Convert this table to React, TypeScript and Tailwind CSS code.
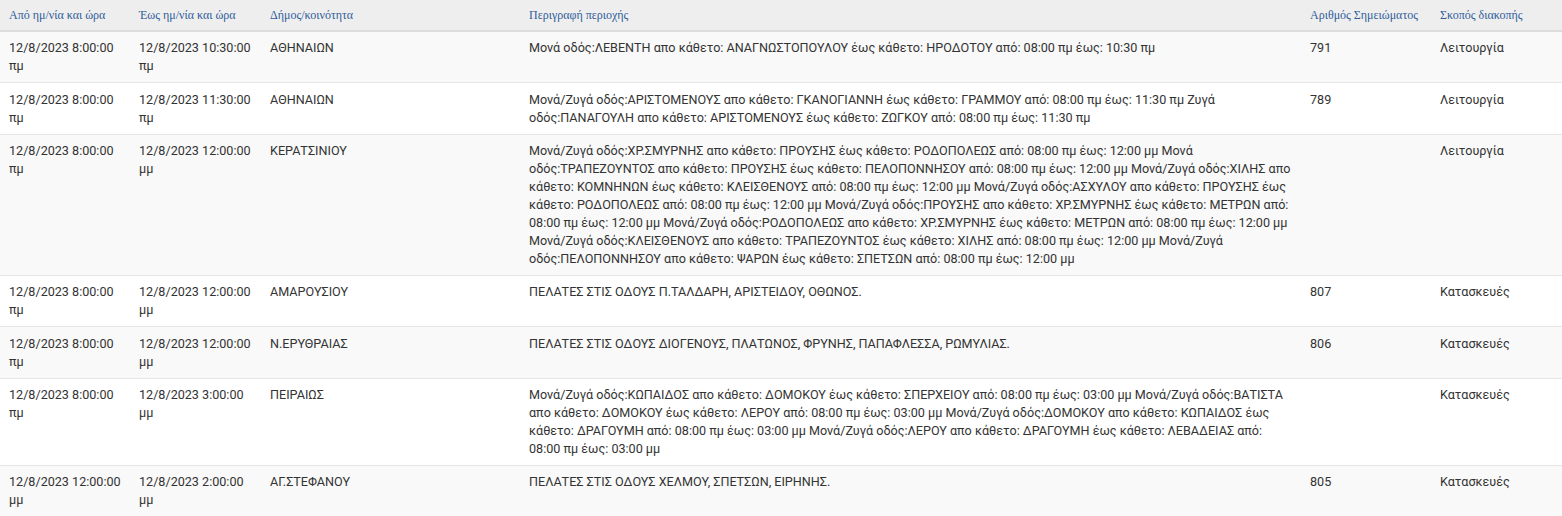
import React from "react";

type Row = {
  from: string[];
  to: string[];
  dimos: string;
  desc: string[];
  num: string;
  purpose: string;
};

const rows: Row[] = [
  {
    from: ["12/8/2023 8:00:00", "πμ"],
    to: ["12/8/2023 10:30:00", "πμ"],
    dimos: "ΑΘΗΝΑΙΩΝ",
    desc: [
      "Μονά οδός:ΛΕΒΕΝΤΗ απο κάθετο: ΑΝΑΓΝΩΣΤΟΠΟΥΛΟΥ έως κάθετο: ΗΡΟΔΟΤΟΥ από: 08:00 πμ έως: 10:30 πμ",
    ],
    num: "791",
    purpose: "Λειτουργία",
  },
  {
    from: ["12/8/2023 8:00:00", "πμ"],
    to: ["12/8/2023 11:30:00", "πμ"],
    dimos: "ΑΘΗΝΑΙΩΝ",
    desc: [
      "Μονά/Ζυγά οδός:ΑΡΙΣΤΟΜΕΝΟΥΣ απο κάθετο: ΓΚΑΝΟΓΙΑΝΝΗ έως κάθετο: ΓΡΑΜΜΟΥ από: 08:00 πμ έως: 11:30 πμ Ζυγά",
      "οδός:ΠΑΝΑΓΟΥΛΗ απο κάθετο: ΑΡΙΣΤΟΜΕΝΟΥΣ έως κάθετο: ΖΩΓΚΟΥ από: 08:00 πμ έως: 11:30 πμ",
    ],
    num: "789",
    purpose: "Λειτουργία",
  },
  {
    from: ["12/8/2023 8:00:00", "πμ"],
    to: ["12/8/2023 12:00:00", "μμ"],
    dimos: "ΚΕΡΑΤΣΙΝΙΟΥ",
    desc: [
      "Μονά/Ζυγά οδός:ΧΡ.ΣΜΥΡΝΗΣ απο κάθετο: ΠΡΟΥΣΗΣ έως κάθετο: ΡΟΔΟΠΟΛΕΩΣ από: 08:00 πμ έως: 12:00 μμ Μονά",
      "οδός:ΤΡΑΠΕΖΟΥΝΤΟΣ απο κάθετο: ΠΡΟΥΣΗΣ έως κάθετο: ΠΕΛΟΠΟΝΝΗΣΟΥ από: 08:00 πμ έως: 12:00 μμ Μονά/Ζυγά οδός:ΧΙΛΗΣ απο",
      "κάθετο: ΚΟΜΝΗΝΩΝ έως κάθετο: ΚΛΕΙΣΘΕΝΟΥΣ από: 08:00 πμ έως: 12:00 μμ Μονά/Ζυγά οδός:ΑΣΧΥΛΟΥ απο κάθετο: ΠΡΟΥΣΗΣ έως",
      "κάθετο: ΡΟΔΟΠΟΛΕΩΣ από: 08:00 πμ έως: 12:00 μμ Μονά/Ζυγά οδός:ΠΡΟΥΣΗΣ απο κάθετο: ΧΡ.ΣΜΥΡΝΗΣ έως κάθετο: ΜΕΤΡΩΝ από:",
      "08:00 πμ έως: 12:00 μμ Μονά/Ζυγά οδός:ΡΟΔΟΠΟΛΕΩΣ απο κάθετο: ΧΡ.ΣΜΥΡΝΗΣ έως κάθετο: ΜΕΤΡΩΝ από: 08:00 πμ έως: 12:00 μμ",
      "Μονά/Ζυγά οδός:ΚΛΕΙΣΘΕΝΟΥΣ απο κάθετο: ΤΡΑΠΕΖΟΥΝΤΟΣ έως κάθετο: ΧΙΛΗΣ από: 08:00 πμ έως: 12:00 μμ Μονά/Ζυγά",
      "οδός:ΠΕΛΟΠΟΝΝΗΣΟΥ απο κάθετο: ΨΑΡΩΝ έως κάθετο: ΣΠΕΤΣΩΝ από: 08:00 πμ έως: 12:00 μμ",
    ],
    num: "",
    purpose: "Λειτουργία",
  },
  {
    from: ["12/8/2023 8:00:00", "πμ"],
    to: ["12/8/2023 12:00:00", "μμ"],
    dimos: "ΑΜΑΡΟΥΣΙΟΥ",
    desc: ["ΠΕΛΑΤΕΣ ΣΤΙΣ ΟΔΟΥΣ Π.ΤΑΛΔΑΡΗ, ΑΡΙΣΤΕΙΔΟΥ, ΟΘΩΝΟΣ."],
    num: "807",
    purpose: "Κατασκευές",
  },
  {
    from: ["12/8/2023 8:00:00", "πμ"],
    to: ["12/8/2023 12:00:00", "μμ"],
    dimos: "Ν.ΕΡΥΘΡΑΙΑΣ",
    desc: ["ΠΕΛΑΤΕΣ ΣΤΙΣ ΟΔΟΥΣ ΔΙΟΓΕΝΟΥΣ, ΠΛΑΤΩΝΟΣ, ΦΡΥΝΗΣ, ΠΑΠΑΦΛΕΣΣΑ, ΡΩΜΥΛΙΑΣ."],
    num: "806",
    purpose: "Κατασκευές",
  },
  {
    from: ["12/8/2023 8:00:00", "πμ"],
    to: ["12/8/2023 3:00:00", "μμ"],
    dimos: "ΠΕΙΡΑΙΩΣ",
    desc: [
      "Μονά/Ζυγά οδός:ΚΩΠΑΙΔΟΣ απο κάθετο: ΔΟΜΟΚΟΥ έως κάθετο: ΣΠΕΡΧΕΙΟΥ από: 08:00 πμ έως: 03:00 μμ Μονά/Ζυγά οδός:ΒΑΤΙΣΤΑ",
      "απο κάθετο: ΔΟΜΟΚΟΥ έως κάθετο: ΛΕΡΟΥ από: 08:00 πμ έως: 03:00 μμ Μονά/Ζυγά οδός:ΔΟΜΟΚΟΥ απο κάθετο: ΚΩΠΑΙΔΟΣ έως",
      "κάθετο: ΔΡΑΓΟΥΜΗ από: 08:00 πμ έως: 03:00 μμ Μονά/Ζυγά οδός:ΛΕΡΟΥ απο κάθετο: ΔΡΑΓΟΥΜΗ έως κάθετο: ΛΕΒΑΔΕΙΑΣ από:",
      "08:00 πμ έως: 03:00 μμ",
    ],
    num: "",
    purpose: "Κατασκευές",
  },
  {
    from: ["12/8/2023 12:00:00", "μμ"],
    to: ["12/8/2023 2:00:00", "μμ"],
    dimos: "ΑΓ.ΣΤΕΦΑΝΟΥ",
    desc: ["ΠΕΛΑΤΕΣ ΣΤΙΣ ΟΔΟΥΣ ΧΕΛΜΟΥ, ΣΠΕΤΣΩΝ, ΕΙΡΗΝΗΣ."],
    num: "805",
    purpose: "Κατασκευές",
  },
];

const headers = [
  "Από ημ/νία και ώρα",
  "Έως ημ/νία και ώρα",
  "Δήμος/κοινότητα",
  "Περιγραφή περιοχής",
  "Αριθμός Σημειώματος",
  "Σκοπός διακοπής",
];

function Lines({ lines }: { lines: string[] }) {
  return (
    <>
      {lines.map((l, i) => (
        <div key={i} className="whitespace-nowrap">
          {l}
        </div>
      ))}
    </>
  );
}

export default function App() {
  return (
    <div className="w-[1562px] h-[516px] overflow-hidden bg-white">
      <div className="grid grid-cols-[131px_131px_259px_781px_130px_130px] bg-[#eeeeee] border-b-2 border-[#dddddd] font-['Liberation_Serif',serif] text-[12px] leading-[18px] text-[#2f5d9a]">
        {headers.map((h, i) => (
          <div key={i} className={`py-[6px] pr-[8px] ${i === 0 ? "pl-[9px]" : "pl-[8px]"}`}>
            {h}
          </div>
        ))}
      </div>
      {rows.map((r, idx) => (
        <div
          key={idx}
          className={`grid grid-cols-[131px_131px_259px_781px_130px_130px] border-b border-[#e6e6e6] font-['Roboto',sans-serif] text-[12.6px] leading-[18px] text-[#333333] ${
            idx % 2 === 0 ? "bg-[#f9f9f9]" : "bg-white"
          }`}
        >
          <div className="pl-[9px] pr-[8px] pt-[7.33px] pb-[7px]">
            <Lines lines={r.from} />
          </div>
          <div className="px-[8px] pt-[7.33px] pb-[7px]">
            <Lines lines={r.to} />
          </div>
          <div className="px-[8px] pt-[7.33px] pb-[7px]">{r.dimos}</div>
          <div className="px-[8px] pt-[7.33px] pb-[7px]">
            <Lines lines={r.desc} />
          </div>
          <div className="px-[8px] pt-[7.33px] pb-[7px]">{r.num}</div>
          <div className="px-[8px] pt-[7.33px] pb-[7px]">{r.purpose}</div>
        </div>
      ))}
    </div>
  );
}
